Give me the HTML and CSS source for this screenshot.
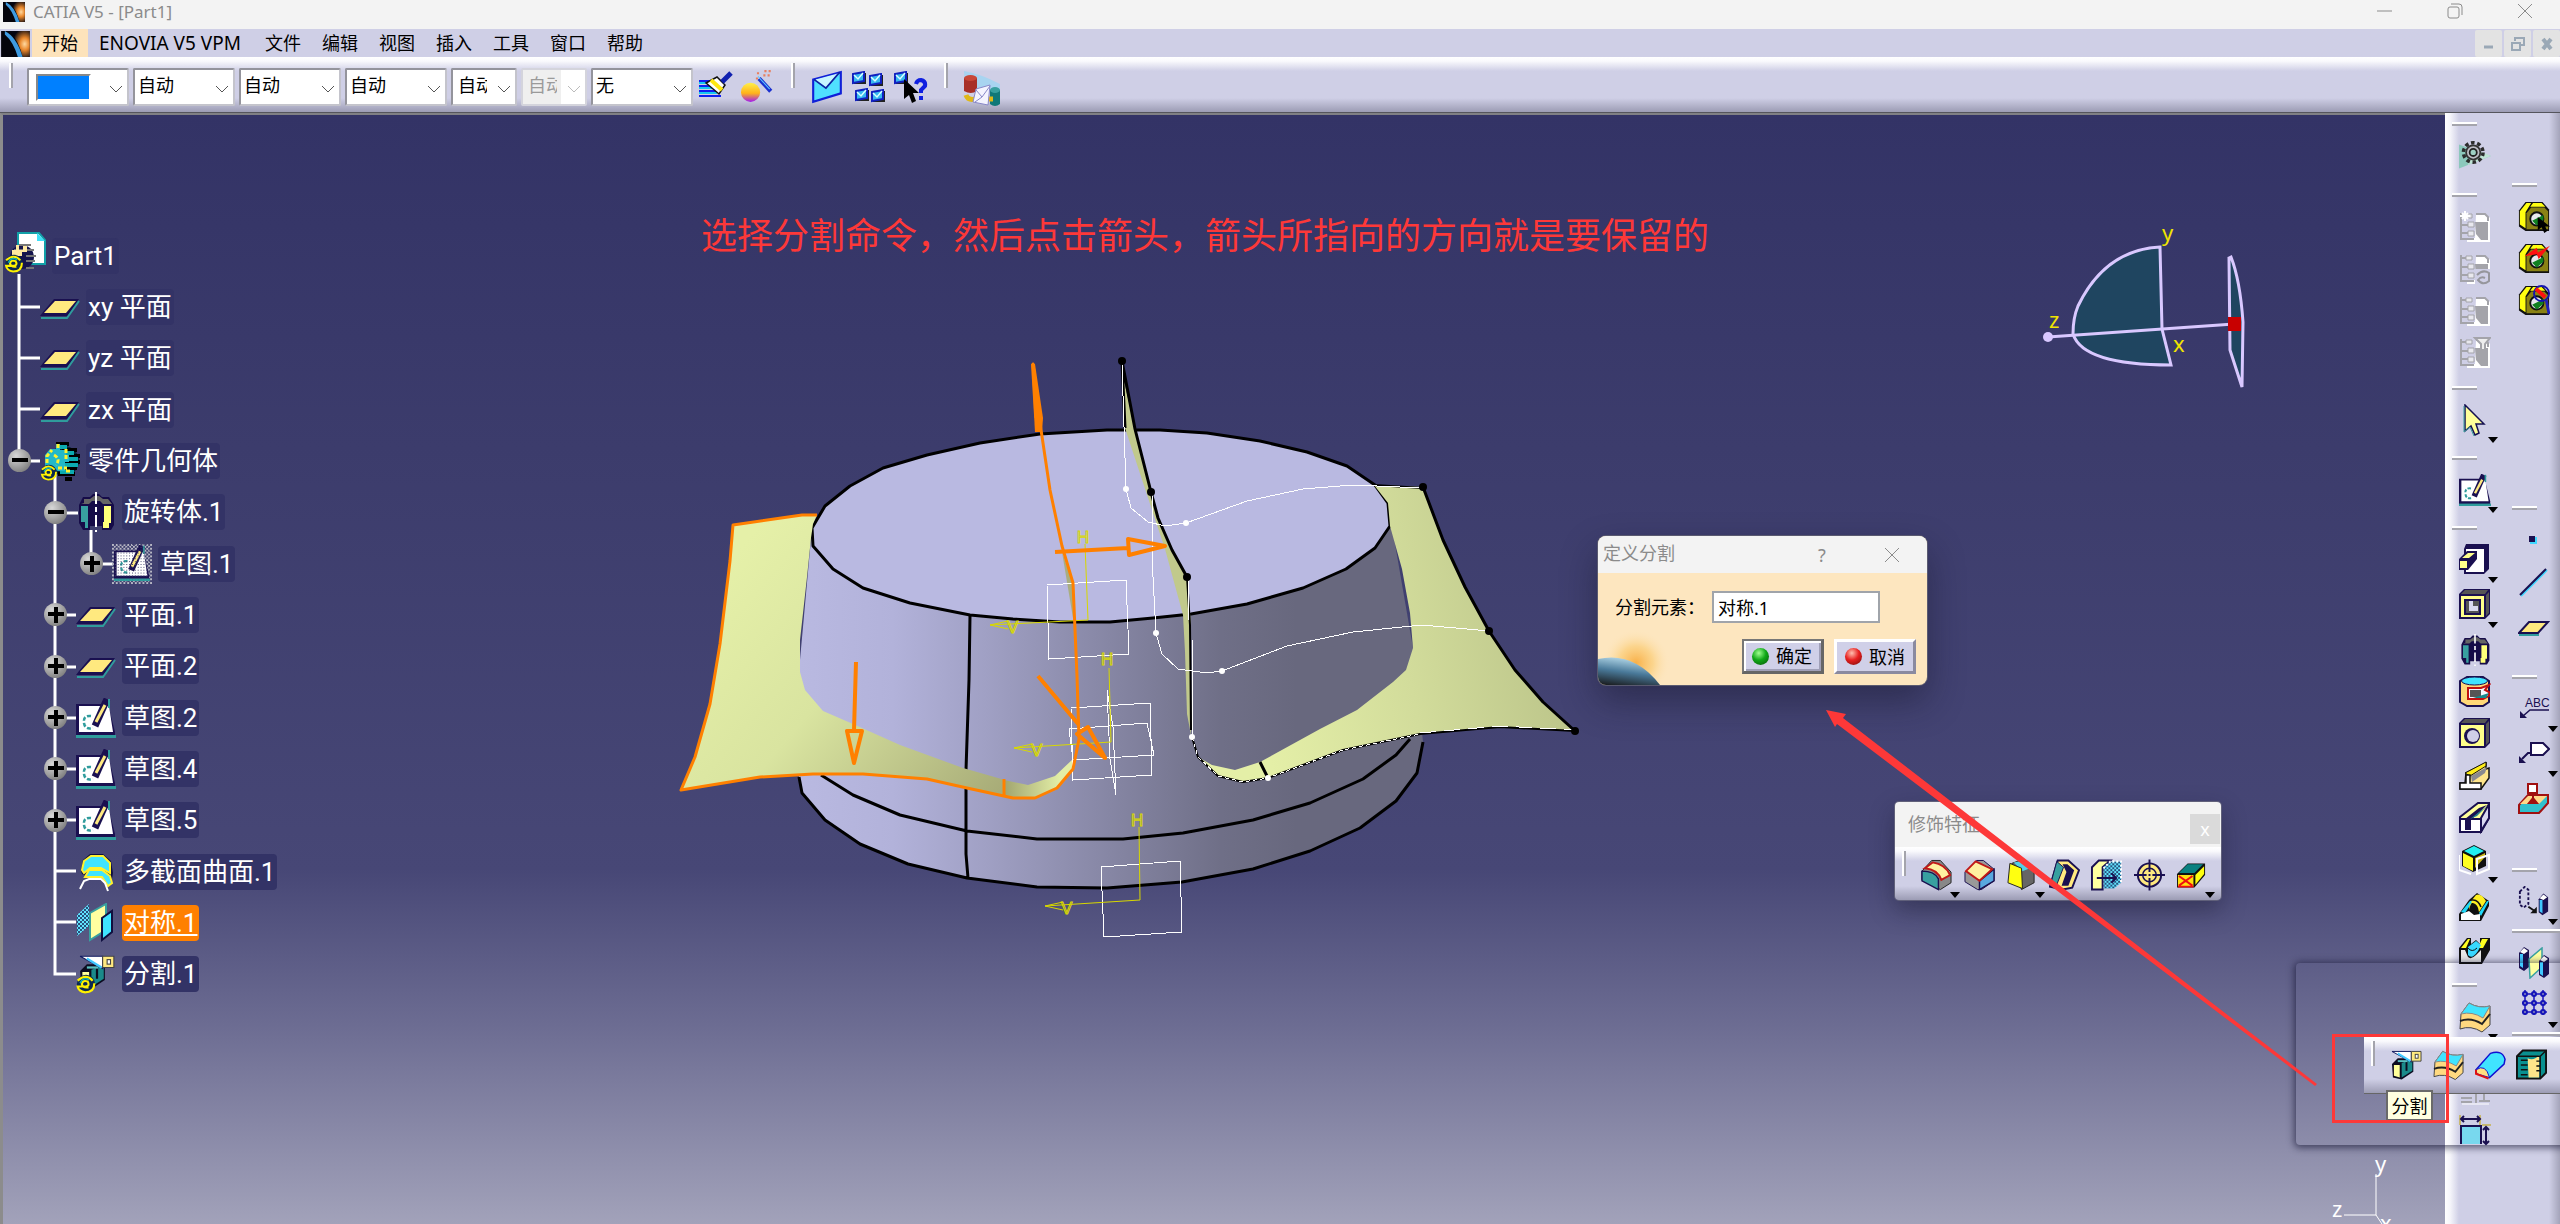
FILE: index.html
```html
<!DOCTYPE html>
<html lang="zh-CN">
<head>
<meta charset="utf-8">
<title>CATIA V5 - [Part1]</title>
<link rel="stylesheet" href="styles.css">
</head>
<body>
<svg class="defs" aria-hidden="true">
  <defs>
    <radialGradient id="sun" cx=".75" cy=".5" r=".6"><stop offset="0" stop-color="#ffd9a0"/><stop offset=".4" stop-color="#e8862a"/><stop offset="1" stop-color="#050510"/></radialGradient>
    <linearGradient id="ball" x2="0" y2="1"><stop offset="0" stop-color="#fff04a"/><stop offset=".55" stop-color="#ffb21a"/><stop offset="1" stop-color="#a21af0"/></linearGradient>
    <symbol id="logo" viewBox="0 0 24 22"><rect width="24" height="22" fill="#05050c"/><rect x="7" width="17" height="22" fill="url(#sun)"/><path d="M0 0H7Q15 9 18 22H0Z" fill="#05050c"/><path d="M3 0Q13 5 18 22H14Q10 9 3 3Z" fill="#3f9be0"/></symbol>
    <symbol id="plane" viewBox="0 0 40 40"><path d="M14 12H39L28 29H0L3 25Z" fill="#1a1050"/><path d="M39 14 27 31H1" fill="none" stroke="#2f9c9c" stroke-width="2"/><path d="M15 14H36L26 26H4Z" fill="#ffe97f"/></symbol>
    <symbol id="sketch" viewBox="0 0 40 40"><path d="M0 6H32L39 34V39H0Z" fill="#1a1050"/><path d="M3 8H33L37 34H3Z" fill="#fff"/><path d="M0 38.500H40" stroke="#2f9c9c" stroke-width="3"/><path d="M15 18Q7 17 8 25 9 32 17 30" fill="none" stroke="#2f9c9c" stroke-width="2.500" stroke-dasharray="4 2"/><path d="M31 1 19 28" stroke="#1a1050" stroke-width="7"/><path d="M29 7 20 24" stroke="#ffe97f" stroke-width="3"/><path d="M33 1V10" stroke="#2f9c9c" stroke-width="2"/></symbol>
    <symbol id="sketch-dim" viewBox="0 0 42 42"><rect width="42" height="42" fill="url(#mesh)"/><use href="#sketch" x="2" y="1" width="38" height="38"/><rect x="2" width="40" height="42" fill="url(#mesh-holes)"/></symbol>
    <pattern id="mesh" width="4" height="4" patternUnits="userSpaceOnUse"><rect width="2" height="2" fill="#b8b8c4"/><rect x="2" y="2" width="2" height="2" fill="#b8b8c4"/></pattern>
    <pattern id="mesh-holes" width="3" height="3" patternUnits="userSpaceOnUse"><rect width="1" height="1" fill="#45456f"/></pattern>
    <symbol id="shaft" viewBox="0 0 40 40"><path d="M3 13 7 5H14L17 2H23L26 5H33L38 13V33L35 38H26V34H14V38H7L3 31Z" fill="#160c48"/><path d="M8 11V7H14L18 4H23L27 7H32L36 12H27L24 9H16L13 12H5Z" fill="#666"/><path d="M5 14H12V36H9V30H5Z" fill="#38a0a0"/><path d="M28 14H35V31H33V36H27V30H28Z" fill="#ffff7a"/><path d="M20 0V40" stroke="#fff" stroke-width="2" stroke-dasharray="12 3 5 3"/></symbol>
    <symbol id="swirl" viewBox="0 0 24 24"><circle cx="12" cy="12" r="11" fill="#0d2a50"/><path d="M2 8Q12-1 20 8M22 11Q22 22 11 22 3 21 2 15H12Q17 14 14 9 8 7 7 12 8 17 15 16" fill="none" stroke="#fff200" stroke-width="2.600"/><path d="M5 11Q8 3 16 7" fill="none" stroke="#12b0b0" stroke-width="2"/></symbol>
    <symbol id="part" viewBox="0 0 42 42"><path d="M14 1H35L41 8V32H14Z" fill="#fff" stroke="#12a0a8" stroke-width="2"/><path d="M33 1 41 9H33Z" fill="#3fe0f8"/><circle cx="18" cy="25" r="12" fill="#14144c"/><path d="M15 13H27M10 18H30M22 24H32M22 29H31M22 36H30" stroke="#777" stroke-width="2"/><path d="M8 27V18H12V13H15V18H19V14H23V20H18V24H10" fill="#ffe9a0"/><use href="#swirl" x="0" y="22" width="20" height="19"/></symbol>
    <symbol id="body" viewBox="0 0 40 40"><circle cx="24" cy="20" r="15" fill="#002838"/><path d="M16 3H29M22 9H37M24 15H40M24 21H40M20 27H37M18 33H35M25 38H32" stroke="#000" stroke-width="4"/><path d="M16 6H27M20 12H34M23 18H38M20 24H38M20 31H34" stroke="#0cabb0" stroke-width="4"/><path d="M5 26V14L10 8H16V3H20V9H26V14H29V21H25V30H18Z" fill="#22b8c8"/><path d="M7 22V15L12 9M18 3V9M26 8V18M14 14Q21 18 16 24M18 27H27M30 30H24" fill="none" stroke="#fff12e" stroke-width="3" stroke-dasharray="4 2"/><use href="#swirl" x="0" y="23" width="18" height="17"/></symbol>
    <symbol id="loft" viewBox="0 0 40 40"><path d="M5 19 7 8 14 2H27L35 9 37 21 35 33 31 35 28 29 21 25H12L6 22Z" fill="#101040"/><path d="M6 18 8 9 15 4H27L34 11V21L25 16H14L8 21Z" fill="#40e4ff" stroke="#fff12e" stroke-width="2"/><path d="M9 25 13 18H26L34 24 36 31 32 34 26 25Z" fill="#40e4ff" stroke="#fff12e" stroke-width="2"/><path d="M4 37 8 29 13 27H25L29 31 32 39" fill="none" stroke="#fff" stroke-width="2"/></symbol>
    <symbol id="symmetry" viewBox="0 0 40 40"><path d="M1 12 13 1V23L1 33Z" fill="url(#dots)"/><path d="M14 10 30 1V27L14 37Z" fill="#ffffa0" stroke="#38a0a0" stroke-width="2"/><path d="M26 15 36 8V29L26 37Z" fill="#40e4ff" stroke="#101040" stroke-width="2"/></symbol>
    <pattern id="dots" width="4" height="4" patternUnits="userSpaceOnUse"><rect width="4" height="4" fill="#28507c"/><rect width="2" height="2" fill="#60e4ff"/><rect x="2" y="2" width="2" height="2" fill="#60e4ff"/></pattern>
    <symbol id="split" viewBox="0 0 32 32"><path d="M1 15 7 9H23V23L11 31 2 29Z" fill="#0c0c20"/><path d="M11 14 22 10V22L11 29Z" fill="#1a8a8a"/><path d="M3 16H9V29L3 27Z" fill="#ffff9a"/><path d="M16 12V22" stroke="#0c0c20" stroke-width="2"/><path d="M7 12H17" stroke="#5ac0c0" stroke-width="2"/><path d="M1 2H21V13Z" fill="#fff" stroke="#111a60"/><path d="M7 4 20 12" stroke="#40c8ff" stroke-width="2"/><path d="M21 2H31V12H21Z" fill="#ffe97f" stroke="#444"/><rect x="25" y="5" width="3" height="4" fill="#fff" stroke="#444"/></symbol>
    <symbol id="split-tree" viewBox="0 0 40 40"><use href="#split" x="2" y="0" width="38" height="36"/><use href="#swirl" x="0" y="20" width="20" height="20"/></symbol>

    <symbol id="gear" viewBox="0 0 36 36"><path d="M0 5 36 18 0 32Z" fill="#8cc8bc"/><path d="M16 9 36 18 10 28Z" fill="#bfe3d4"/><circle cx="16" cy="14" r="11" fill="none" stroke="#2c2c2c" stroke-width="4" stroke-dasharray="4 3"/><circle cx="16" cy="14" r="8" fill="#bcbcc4" stroke="#333" stroke-width="2"/><circle cx="16" cy="14" r="4" fill="#9fd0c4" stroke="#222" stroke-width="2"/></symbol>
    <symbol id="cache" viewBox="0 0 32 32"><path d="M17 3H27L31 7V31H8V27H16Z" fill="#fff"/><path d="M16 11H29V29H22L17 23Z" fill="#a4a4aa"/><path d="M17 3H26L29 6V10" fill="none" stroke="#a4a4aa" stroke-width="2"/><path d="M2 2V28H15M2 5H8M2 14H9M2 22H9" fill="none" stroke="#a4a4aa" stroke-width="2"/><path d="M7 3H13V7H7ZM9 11H15V16H9ZM9 20H15V25H9Z" fill="#e8e8ee" stroke="#a4a4aa"/></symbol>
    <symbol id="cache-new" viewBox="0 0 32 32"><use href="#cache"/><path d="M6 0V10M1 5H11M3 2 9 8M9 2 3 8" stroke="#fff" stroke-width="2"/></symbol>
    <symbol id="cache-link" viewBox="0 0 32 32"><use href="#cache"/><path d="M16 16H32V32H16Z" fill="#cfcfe6"/><path d="M18 22Q24 16 30 20V28Q24 33 19 27 22 23 26 25" fill="none" stroke="#96969c" stroke-width="2"/></symbol>
    <symbol id="cache-filter" viewBox="0 0 32 32"><use href="#cache"/><path d="M16 1H31L26 7V13H22V7Z" fill="#eee" stroke="#a4a4aa" stroke-width="2"/></symbol>
    <symbol id="pointer" viewBox="0 0 32 32"><path d="M6 1V27L12 22 16 31 20 29 17 20H25Z" fill="#ffff9a" stroke="#141050" stroke-width="1.500"/><path d="M5 2V28L11 23 15 32" fill="none" stroke="#3a9c9c"/></symbol>
    <symbol id="pad" viewBox="0 0 32 32"><path d="M7 0H30V25L25 30H5V5Z" fill="#1a1050"/><path d="M7 5H25V28H7Z" fill="#fff"/><path d="M0 15 8 7H18V15L9 26H0Z" fill="#1a1050"/><path d="M1 17H8V24H1ZM3 14 9 9H16L10 14Z" fill="#ffff8a"/></symbol>
    <symbol id="pocket" viewBox="0 0 32 32"><path d="M0 5 5 0H31V25L26 30H0Z" fill="#1a1050"/><path d="M6 1H29L26 5H2ZM27 6 30 3V24L27 27Z" fill="#555"/><path d="M2 7H25V28H2Z" fill="#ffff8a"/><path d="M6 11H21V25H6Z" fill="#555" stroke="#1a1050" stroke-width="2"/><path d="M10 12H14V17H19V22H10Z" fill="#d8d8ee"/></symbol>
    <symbol id="groove" viewBox="0 0 32 32"><path d="M1 5 8 1H24L30 5V26L24 30H8L1 26Z" fill="#ffd878" stroke="#1a1050" stroke-width="2"/><ellipse cx="15.500" cy="5" rx="13" ry="4" fill="#40e4ff" stroke="#1a1050"/><path d="M30 9 22 12H9V23H24L30 20V16L26 14Z" fill="#f7f7ff" stroke="#c01010" stroke-width="2"/><path d="M11 14H22V21H11Z" fill="#555"/><path d="M14 22 30 17 27 22Z" fill="#15888c"/></symbol>
    <symbol id="hole" viewBox="0 0 32 32"><path d="M0 5 5 0H31V25L26 30H0Z" fill="#1a1050"/><path d="M6 1H29L26 5H2ZM27 6 30 3V24L27 27Z" fill="#555"/><path d="M2 7H25V28H2Z" fill="#ffff8a"/><circle cx="13" cy="18" r="8" fill="#1a1050"/><circle cx="14" cy="18" r="6" fill="#cfcfe6"/></symbol>
    <symbol id="rib" viewBox="0 0 32 32"><path d="M7 13 27 3V9L30 8V18L22 29H1V23H6Z" fill="#ffe58a" stroke="#111" stroke-width="1.500"/><path d="M12 16 28 7 26 13 13 22Z" fill="#8a8a90"/><path d="M6 13 27 2V6L11 16Z" fill="#ffee18" stroke="#111"/><path d="M1 23H7V15H11V23H22V29H1Z" fill="#fff" stroke="#111" stroke-width="1.500"/></symbol>
    <symbol id="slot" viewBox="0 0 32 32"><path d="M1 15 19 1H30V16L22 30H1Z" fill="#ffff9a" stroke="#1a1050" stroke-width="2"/><path d="M1 17H22V30H1Z" fill="#fff" stroke="#1a1050" stroke-width="2"/><path d="M22 16 30 2V16L22 29Z" fill="#d8d8f0" stroke="#1a1050" stroke-width="2"/><path d="M6 17 20 6 28 3 12 18V28H6Z" fill="#1a1050"/><path d="M11 17 28 4 18 14Z" fill="#20808c"/></symbol>
    <symbol id="stiffener" viewBox="0 0 32 32"><path d="M15 1 27 7V22L14 28 3 22V7Z" fill="#111"/><path d="M15 2 25 7 15 12 5 7Z" fill="#20f0f0"/><path d="M4 9 14 14V27L4 22Z" fill="#ffff20"/><path d="M16 14 26 9V13L16 24Z" fill="#ccb818"/><path d="M0 11V26L12 30M30 11V25L18 30V15Z" fill="none" stroke="#fff" stroke-width="2"/></symbol>
    <symbol id="multi" viewBox="0 0 32 32"><path d="M0 22 10 8 18 1 30 9V14L22 29H0Z" fill="#111"/><path d="M2 20 11 9H14L6 21ZM20 21 28 9H30L22 24Z" fill="#20d8f8"/><path d="M2 28V22L10 19 15 23 21 22V28Z" fill="#fff"/><path d="M10 18Q10 10 14 11 19 12 20 20L27 9Q22 1 17 3L13 8Z" fill="#fff020"/><path d="M13 8Q19 7 22 15" fill="none" stroke="#111" stroke-width="1.500"/></symbol>
    <symbol id="multi-cut" viewBox="0 0 32 32"><path d="M0 12 8 2H12V8L17 4 21 8V2H31V14L23 28H0Z" fill="#111"/><path d="M2 14H6L9 21Q12 24 17 19L22 14V26H2Z" fill="#e8e8e8"/><path d="M2 12 9 3H11L7 12ZM23 3H29L24 12H19Z" fill="#ffff20"/><path d="M9 11 17 5 22 9 19 15Q13 24 9 19Z" fill="#38d8ff"/><path d="M9 12Q13 17 18 12" fill="none" stroke="#111"/></symbol>
    <symbol id="thick" viewBox="0 0 32 32"><path d="M2 13 10 2Q20 8 31 5V24L23 31Q12 24 1 28Z" fill="#ffd980" stroke="#444"/><path d="M2 13 10 2Q20 8 31 5L24 17Q13 10 2 13Z" fill="#40e4ff" stroke="#888"/><path d="M1 20Q12 16 23 23L31 13" fill="none" stroke="#222" stroke-width="2"/></symbol>
    <symbol id="grayed" viewBox="0 0 32 32"><path d="M2 2H14M2 20H13M2 25H13M2 29H13M17 2V30M25 8V28M20 28H31" stroke="#a4a4aa" stroke-width="2"/><path d="M3 31H30" stroke="#fff"/></symbol>
    <symbol id="constraint" viewBox="0 0 32 32"><rect x="2" y="11" width="20" height="18" fill="#78d8ee"/><path d="M2 29V11H22V29" fill="none" stroke="#1a1050" stroke-width="2"/><path d="M1 0V10M21 0V10M23 10H32" stroke="#c8b870" stroke-width="2"/><path d="M2 4H21M5 1 2 4 5 7M18 1 21 4 18 7M27 12V29M24 15 27 12 30 15M24 26 27 29 30 26" fill="none" stroke="#1a1050" stroke-width="2"/></symbol>
    <symbol id="block" viewBox="0 0 34 34"><path d="M1 10 8 1H26L33 9V32H8L1 27Z" fill="#111"/><path d="M2 11 9 2H14L8 12V29L2 25ZM16 2H25L29 6H13Z" fill="#ffff10"/><path d="M9 13 14 7H28L32 11V30H9Z" fill="#8a8214"/><circle cx="20" cy="19" r="7" fill="#e8e8ee" stroke="#111" stroke-width="2"/><path d="M15 21 27 15V20L20 26Z" fill="#108020"/></symbol>
    <symbol id="block-pick" viewBox="0 0 34 34"><use href="#block"/><path d="M21 17V31L25 28 28 34 31 32 29 27H34Z" fill="#000"/></symbol>
    <symbol id="block-bolt" viewBox="0 0 34 34"><use href="#block"/><path d="M7 14 20 5 21 10 34 3 22 17 20 12Z" fill="#ff1010"/></symbol>
    <symbol id="block-lens" viewBox="0 0 34 34"><use href="#block"/><circle cx="25" cy="9" r="8" fill="none" stroke="#1414b0" stroke-width="2"/><path d="M19 4 29 13" stroke="#ff1010" stroke-width="4"/><path d="M30 16 33 31" stroke="#2020b8" stroke-width="3"/></symbol>
    <symbol id="point" viewBox="0 0 32 32"><rect x="12" y="13" width="7" height="7" fill="#40d8ff"/><rect x="11" y="12" width="6" height="6" fill="#1a1050"/></symbol>
    <symbol id="line" viewBox="0 0 32 32"><path d="M3 30 29 4" stroke="#40d8ff" stroke-width="2"/><path d="M2 29 28 3" stroke="#1a1050" stroke-width="2"/></symbol>
    <symbol id="plane-small" viewBox="0 0 32 32"><path d="M11 14H30L20 25H1Z" fill="#ffe97f" stroke="#1a1050" stroke-width="2"/><path d="M1 27H21" stroke="#2f9c9c" stroke-width="2"/></symbol>
    <symbol id="text-note" viewBox="0 0 32 32"><text x="7" y="14" class="glyph-text" fill="#1a1050">ABC</text><path d="M31 17H12L5 23" fill="none" stroke="#1a1050" stroke-width="1.500"/><path d="M2 18V25H9Z" fill="#1a1050"/></symbol>
    <symbol id="flag-note" viewBox="0 0 32 32"><path d="M13 5H25L31 11 25 17H13Z" fill="#fff" stroke="#1a1050" stroke-width="2"/><path d="M13 15H10L4 21" stroke="#1a1050" stroke-width="2" fill="none"/><path d="M1 18V25H8Z" fill="#1a1050"/></symbol>
    <symbol id="datum" viewBox="0 0 32 32"><path d="M1 22 10 12H30V20L21 30H1Z" fill="#30c0cc" stroke="#a01010" stroke-width="2"/><path d="M2 21 10 13H29L21 21Z" fill="#ffd888"/><path d="M15 10V15L11 20H19L15 15" fill="#a01010" stroke="#a01010" stroke-width="2"/><path d="M10 1H19V10H10Z" fill="#fff" stroke="#a01010" stroke-width="2"/></symbol>
    <symbol id="translate" viewBox="0 0 32 34"><path d="M1 6 6 1 10 4V19L5 23 1 20Z" fill="none" stroke="#1a1050" stroke-width="2" stroke-dasharray="3 2"/><path d="M10 22 16 26" stroke="#111" stroke-width="2"/><path d="M12 29H19V22Z" fill="#111"/><path d="M21 14 26 8 31 12V27L25 31 21 28Z" fill="#1a1050"/><path d="M22 15H25V29L22 27Z" fill="#40c8ff"/><path d="M22 13 26 9 30 12 26 15Z" fill="#fff"/></symbol>
    <symbol id="mirror" viewBox="0 0 32 32"><path d="M1 6 6 0 11 3V20L6 24 1 21Z" fill="#1a1050"/><path d="M2 7H5V21L2 19Z" fill="#40c8ff"/><path d="M2 5 6 1 10 4 6 7Z" fill="#fff"/><path d="M11 12 24 1V20L12 31Z" fill="#ffffa0" stroke="#38a0a0" stroke-width="1.500"/><path d="M21 14 26 8 31 11V27L26 31 21 28Z" fill="#1a1050"/><path d="M22 15H25V29L22 27Z" fill="#40c8ff"/><path d="M22 13 26 9 30 12 26 15Z" fill="#fff"/></symbol>
    <symbol id="pattern" viewBox="0 0 32 32"><path d="M4 5H29M4 14H29M4 23H29M7 1V26M16 1V26M25 1V26" stroke="#1a10c0" stroke-width="1.500"/><g fill="#8a8ac0" stroke="#1414b8" stroke-width="2"><circle cx="7" cy="5" r="2"/><circle cx="16" cy="5" r="2"/><circle cx="25" cy="5" r="2"/><circle cx="7" cy="14" r="2"/><circle cx="16" cy="14" r="2"/><circle cx="25" cy="14" r="2"/><circle cx="7" cy="23" r="2"/><circle cx="16" cy="23" r="2"/><circle cx="25" cy="23" r="2"/></g></symbol>
    <symbol id="close-surface" viewBox="0 0 32 32"><path d="M1 21 16 4Q28 0 31 10L30 15 15 29Z" fill="#40e4ff" stroke="#1010d0" stroke-width="1.500"/><path d="M1 21Q11 14 15 29L2 25Z" fill="#ffdf80" stroke="#1010d0"/><path d="M1 21V25L14 30" fill="none" stroke="#e01010" stroke-width="2"/></symbol>
    <symbol id="sew" viewBox="0 0 32 32"><path d="M1 7 7 1H31V24L25 30H1Z" fill="#0a9090" stroke="#111" stroke-width="2"/><path d="M12 9Q18 12 24 6V29H13Z" fill="#ffe58a"/><path d="M1 7H25L31 1M25 7V30M5 11H12M5 16H12M5 21H12M5 26H12M21 12H25M21 17H25M21 22H25" fill="none" stroke="#111" stroke-width="1.500"/></symbol>
    <symbol id="fillet" viewBox="0 0 32 32"><path d="M1 12 11 1H20L31 13V24L20 31 1 21Z" fill="#888" stroke="#222"/><path d="M1 12Q14 12 18 20V31L1 22Z" fill="#38a0a0" stroke="#1a1050" stroke-width="1.500"/><path d="M4 9 12 3Q25 5 30 16L21 21Q17 10 4 9Z" fill="#fff0a0" stroke="#c01818" stroke-width="2"/></symbol>
    <symbol id="chamfer" viewBox="0 0 32 32"><path d="M1 13 13 1H20L31 10V22L18 31H14L1 23Z" fill="#999" stroke="#1a1050"/><path d="M16 22 31 10V22L16 31Z" fill="#58a8e0" stroke="#1a1050" stroke-width="1.500"/><path d="M2 12 12 2 29 10 16 22Z" fill="#fff0a0" stroke="#c01818" stroke-width="2"/></symbol>
    <symbol id="draft" viewBox="0 0 32 32"><path d="M6 4 17 0 29 8V24L16 31Z" fill="#666" stroke="#222"/><path d="M8 3 18 1 27 8 17 12Z" fill="#50d0e8"/><path d="M4 4 16 9 17 30 2 24Z" fill="#ffff10" stroke="#222"/></symbol>
    <symbol id="shell" viewBox="0 0 32 32"><path d="M9 1H20L31 11 24 29 14 31 1 28Z" fill="#ffe97f" stroke="#1a1050" stroke-width="2"/><path d="M8 2 1 28 8 26 15 8Z" fill="#38a0a0" stroke="#1a1050"/><path d="M14 5H19L26 11 20 27H13L18 13Z" fill="#1a1050"/></symbol>
    <symbol id="thickness" viewBox="0 0 32 32"><path d="M1 8 8 1H20L12 8V31H1Z" fill="#ffffa0" stroke="#1a1050" stroke-width="2"/><path d="M13 8 20 2H31V24L24 30H13Z" fill="url(#dots)"/><path d="M13 9 20 2H31V24" fill="none" stroke="#fff" stroke-width="2" stroke-dasharray="2 2"/><path d="M6 19H26M21 14 26 19 21 24" fill="none" stroke="#1a1050" stroke-width="2"/></symbol>
    <symbol id="thread" viewBox="0 0 32 32"><circle cx="16" cy="16" r="12" fill="#ffe97f" stroke="#1a1050" stroke-width="2"/><circle cx="16" cy="16" r="7" fill="none" stroke="#1a1050" stroke-width="1.500"/><path d="M16 0V32M0 16H32" stroke="#1a1050" stroke-width="2" stroke-dasharray="13 2 2 2"/></symbol>
    <symbol id="remove-face" viewBox="0 0 32 32"><path d="M1 15 12 4H30V16L19 29H1Z" fill="#111"/><path d="M3 14 12 5H28L19 14Z" fill="#0a8080"/><path d="M20 16 29 7V15L20 26Z" fill="#ffff10"/><path d="M2 16H18V28H2Z" fill="#ffe010"/><path d="M3 17 17 27M17 17 3 27M2 28H18" stroke="#f01010" stroke-width="2"/></symbol>

    <symbol id="brush" viewBox="0 0 34 32"><path d="M0 10H13M0 15H15M0 20H18M0 25H22" stroke="#1020f0" stroke-width="2"/><path d="M0 12H12M0 17H15M0 22H18" stroke="#18c8f0" stroke-width="2"/><path d="M7 12 18 6 26 14 20 23Z" fill="#fff" stroke="#111" stroke-width="1.500"/><path d="M12 9 23 19" stroke="#ffe810" stroke-width="4"/><path d="M23 11 32 2" stroke="#1020b0" stroke-width="5"/></symbol>
    <symbol id="wand" viewBox="0 0 32 32"><circle cx="9" cy="21" r="9" fill="url(#ball)"/><path d="M17 8 28 20" stroke="#1a30d0" stroke-width="4"/><path d="M16 6 27 18" stroke="#60c8ff"/><path d="M15 3H19M22 1H29M21 5H29M14 8H18" stroke="#e88060" stroke-width="2" stroke-dasharray="2 2"/></symbol>
    <symbol id="mail" viewBox="0 0 30 32"><path d="M2 9 28 2V22L2 30Z" fill="#50e0ff" stroke="#1020d8" stroke-width="2"/><path d="M4 9 26 3 14 16Z" fill="#c8f6ff"/><path d="M3 9 14 17 27 2" fill="none" stroke="#1020a0" stroke-width="1.500"/></symbol>
    <symbol id="mail-mini" viewBox="0 0 14 14"><path d="M3 13V12H13V2" fill="none" stroke="#222" stroke-width="2"/><path d="M1 3 12 1V10L1 12Z" fill="#38b8f0" stroke="#1020c0" stroke-width="2"/><path d="M2 4 6 8 11 2" fill="none" stroke="#d8ffff" stroke-width="1.500"/></symbol>
    <symbol id="mails" viewBox="0 0 34 32"><use href="#mail-mini" x="0" y="0" width="14" height="14"/><use href="#mail-mini" x="17" y="2" width="14" height="14"/><use href="#mail-mini" x="3" y="17" width="14" height="14"/><use href="#mail-mini" x="19" y="18" width="14" height="14"/></symbol>
    <symbol id="mail-help" viewBox="0 0 34 32"><use href="#mail-mini" x="0" y="0" width="14" height="14"/><path d="M10 8V28L15 24 18 32 22 30 19 22H25Z" fill="#000"/><path d="M22 13Q23 9 27 9 32 10 31 15L27 19V22M27 25V29" fill="none" stroke="#1020e0" stroke-width="4"/></symbol>
    <symbol id="database" viewBox="0 0 38 38"><path d="M1 1Q18 4 37 14V24L2 20Z" fill="#a8d4f0"/><path d="M1 8V21Q8 25 14 21V8Z" fill="#a83028"/><ellipse cx="7.500" cy="8" rx="6.500" ry="3" fill="#c84838"/><path d="M27 20V34Q32 38 37 34V20Z" fill="#107878"/><ellipse cx="32" cy="20" rx="5" ry="3" fill="#38a0a0"/><path d="M3 25Q5 31 13 29M30 29H22" fill="none" stroke="#e0b818" stroke-width="5"/><path d="M13 19 27 15 25 35 10 32Z" fill="#f4f4ff" stroke="#8888c8"/><path d="M13 20 19 27 27 16M19 27 12 32" fill="none" stroke="#8888c8"/></symbol>
  </defs>
</svg>

<header class="titlebar">
  <svg class="titlebar-icon"><use href="#logo"/></svg>
  <h1>CATIA V5 - [Part1]</h1>
  <div class="window-controls">
    <button aria-label="最小化"><svg viewBox="0 0 16 16"><path d="M0 8H15"/></svg></button>
    <button aria-label="还原"><svg viewBox="0 0 16 16"><rect x="1" y="4" width="11" height="11" rx="2"/><path d="M4 1H12Q15 1 15 4V12"/></svg></button>
    <button aria-label="关闭"><svg viewBox="0 0 16 16"><path d="M1 1 15 15M15 1 1 15"/></svg></button>
  </div>
</header>

<nav class="menubar">
  <svg class="menubar-icon"><use href="#logo"/></svg>
  <button class="active">开始</button><button class="latin">ENOVIA V5 VPM</button><button>文件</button><button>编辑</button><button>视图</button><button>插入</button><button>工具</button><button>窗口</button><button>帮助</button>
  <div class="doc-controls">
    <button aria-label="最小化文档"><svg viewBox="0 0 14 14"><path d="M2 10H11" stroke-width="3"/></svg></button>
    <button aria-label="还原文档"><svg viewBox="0 0 14 14"><path d="M4 4V1H13V8H10M1 6H9V13H1Z" stroke-width="2"/></svg></button>
    <button aria-label="关闭文档"><svg viewBox="0 0 14 14"><path d="M3 2 11 12M11 2 3 12" stroke-width="4"/></svg></button>
  </div>
</nav>

<div class="toolbar">
  <i class="grip-v"></i>
  <div class="combos">
    <div class="combo"><select aria-label="颜色"><option></option></select><span class="swatch"></span><svg viewBox="0 0 14 8"><path d="M1 1 7 7 13 1"/></svg></div>
    <div class="combo"><select aria-label="透明度"><option>自动</option></select><svg viewBox="0 0 14 8"><path d="M1 1 7 7 13 1"/></svg></div>
    <div class="combo"><select aria-label="线宽"><option>自动</option></select><svg viewBox="0 0 14 8"><path d="M1 1 7 7 13 1"/></svg></div>
    <div class="combo"><select aria-label="线型"><option>自动</option></select><svg viewBox="0 0 14 8"><path d="M1 1 7 7 13 1"/></svg></div>
    <div class="combo narrow"><select aria-label="点符号"><option>自动</option></select><svg viewBox="0 0 14 8"><path d="M1 1 7 7 13 1"/></svg></div>
    <div class="combo narrow disabled"><select aria-label="渲染样式" disabled><option>自动</option></select><svg viewBox="0 0 14 8"><path d="M1 1 7 7 13 1"/></svg></div>
    <div class="combo"><select aria-label="图层"><option>无</option></select><svg viewBox="0 0 14 8"><path d="M1 1 7 7 13 1"/></svg></div>
  </div>
  <div class="group">
    <button aria-label="格式刷"><svg><use href="#brush"/></svg></button>
    <button aria-label="向导"><svg><use href="#wand"/></svg></button>
  </div>
  <i class="grip-v"></i>
  <div class="group spaced">
    <button aria-label="消息"><svg><use href="#mail"/></svg></button>
    <button aria-label="消息列表"><svg><use href="#mails"/></svg></button>
    <button aria-label="这是什么"><svg><use href="#mail-help"/></svg></button>
  </div>
  <i class="grip-v"></i>
  <div class="group spaced">
    <button aria-label="数据库" class="large"><svg><use href="#database"/></svg></button>
  </div>
</div>

<main class="workspace">
  <section class="viewport">
    <svg class="scene" viewBox="3 115 2442 1109" preserveAspectRatio="xMinYMin meet">
      <defs>
        <linearGradient id="side" gradientUnits="userSpaceOnUse" x1="800" y1="0" x2="1420" y2="0"><stop offset="0" stop-color="#b9b9e1"/><stop offset=".15" stop-color="#b2b2da"/><stop offset=".3" stop-color="#a0a0c4"/><stop offset=".5" stop-color="#8686a4"/><stop offset=".68" stop-color="#6f6f87"/><stop offset=".8" stop-color="#68687e"/><stop offset="1" stop-color="#68687e"/></linearGradient>
        <linearGradient id="wingL" gradientUnits="userSpaceOnUse" x1="730" y1="560" x2="1000" y2="790"><stop offset="0" stop-color="#e5f0a8"/><stop offset=".45" stop-color="#d9e4a0"/><stop offset="1" stop-color="#a8ac78"/></linearGradient>
        <linearGradient id="curlL" gradientUnits="userSpaceOnUse" x1="1005" y1="0" x2="1060" y2="0"><stop offset="0" stop-color="#a2a670"/><stop offset="1" stop-color="#e3eea6"/></linearGradient>
        <linearGradient id="wingR" gradientUnits="userSpaceOnUse" x1="1270" y1="760" x2="1570" y2="700"><stop offset="0" stop-color="#e4efa7"/><stop offset=".5" stop-color="#d2dc9b"/><stop offset="1" stop-color="#bcc58a"/></linearGradient>
      </defs>
      <path fill="url(#side)" d="M812 528 800 660 799 777 802 793 825 820 860 844 908 864 967 878 1037 887 1107 888 1182 882 1253 869 1310 851 1360 828 1396 801 1417 773 1423 742 1413 648 1390 515Z"/>
      <path class="edge top" d="M812 528 825 506 850 486 883 468 927 455 980 443 1040 434 1107 430 1160 430 1207 433 1260 441 1307 452 1347 466 1375 485 1388 503 1390 526 1375 548 1346 569 1303 588 1247 604 1191 614 1153 618 1110 622 1060 622 1013 619 970 615 910 603 863 588 833 569 813 546Z"/>
      <path class="edge" d="M799 777 802 793 825 820 860 844 908 864 967 878 1037 887 1107 888 1182 882 1253 869 1310 851 1360 828 1396 801 1417 773 1423 742M821 775 853 795 900 815 967 831 1037 839 1123 839 1183 833 1253 820 1310 803 1363 779 1396 755 1410 739M970 616 969 680 966 770V854L968 878"/>
      <path fill="url(#wingL)" d="M817 515 802 515 733 525 730 561 720 644 710 704 695 757 681 790 760 777 813 774 863 774 927 779 967 788 1005 797V780L963 768 900 745 853 724 823 711 805 690 800 672V640L807 577 811 538 813 524Z"/>
      <path fill="url(#curlL)" d="M1004 780 1028 785 1055 776 1073 759V769L1057 788 1035 798 1005 797Z"/>
      <path fill="#a9ad80" d="M1062 552 1073 584V618Z"/>
      <path fill="url(#wingR)" d="M1374 485 1423 487 1443 540 1465 587 1489 631 1515 670 1543 702 1575 731 1500 727 1420 734 1343 750 1268 778 1243 782 1218 776 1198 757 1212 765 1235 770 1260 762 1320 729 1357 710 1393 682 1406 670 1413 648 1410 613 1402 569 1390 526 1388 503Z"/>
      <path fill="#c1c98c" d="M1122 372 1135 429 1151 492 1158 518 1172 550 1187 577 1191 625V735L1187 714 1185 652 1183 615 1165 549 1152 510 1125 428Z"/>
      <path class="edge" d="M1423 487 1443 540 1465 587 1489 631 1515 670 1543 702 1575 731M1125 428 1122 361 1135 429 1151 492 1158 518 1172 550 1187 577M1260 762 1268 778"/>
      <path class="edge thin" d="M1187 577 1190 625 1191 730M1192 737 1198 757 1218 776 1243 782 1268 778 1343 750 1420 734 1500 727 1575 731M1374 485 1423 488"/>
      <path class="wire" d="M1188 580 1189 620M1192 640V735"/>
      <path class="wire dotted" d="M1192 737 1198 757 1218 776 1243 782 1268 778 1343 750 1420 734"/>
      <path class="wire dashed" d="M1420 733 1500 726 1575 730"/>
      <path class="wire" d="M1122 364 1126 489 1131 508 1148 522 1165 526 1186 523 1247 501 1303 489 1353 485 1423 488M1152 494 1153 577 1156 633 1162 654 1178 669 1207 673 1222 671 1287 646 1353 632 1422 625 1489 631"/>
      <g fill="#000"><circle cx="1122" cy="361" r="4"/><circle cx="1151" cy="492" r="4"/><circle cx="1187" cy="577" r="4"/><circle cx="1423" cy="487" r="4"/><circle cx="1489" cy="631" r="4"/><circle cx="1575" cy="731" r="4"/></g>
      <g fill="#fff"><circle cx="1126" cy="489" r="3"/><circle cx="1186" cy="523" r="3"/><circle cx="1156" cy="633" r="3"/><circle cx="1222" cy="671" r="3"/><circle cx="1192" cy="737" r="3"/><circle cx="1268" cy="778" r="3"/></g>
      <path class="wire" d="M1047 585 1126 580 1129 654 1049 659ZM1071 708 1150 703 1152 775 1073 780ZM1069 729 1147 723 1154 755 1073 760ZM1107 690 1113 727 1116 795 1110 759ZM1101 867 1180 861 1182 932 1104 937Z"/>
      <g class="axis">
        <path d="M1085 544 1088 620 990 625 1008 621M990 625 1008 629M1109 668 1111 742 1014 748 1032 744M1014 748 1032 752M1139 827 1140 900 1045 906 1063 902M1045 906 1063 910"/>
        <text x="1077" y="543">H</text><text x="1101" y="665">H</text><text x="1131" y="826">H</text>
        <text x="1007" y="633">V</text><text x="1031" y="756">V</text><text x="1061" y="914">V</text>
      </g>
      <path class="selected" d="M817 515H802L733 525 730 561 720 644 710 704 695 757 681 790 760 777 813 774H863L927 779 967 788 1013 798H1035L1057 788 1073 769 1079 739 1077 676 1073 583 1062 546 1050 490 1040 423 1033 364 1036 418M1004 779V797"/>
      <path fill="#ff8000" d="M1031 364H1035L1043 418L1042 432H1035Z"/>
      <path class="selected bold" d="M1055 552 1128 548M1128 539 1129 555 1165 546ZM856 662 854 730M847 731H862L854 763ZM1038 676 1079 725M1088 727 1077 734 1105 758Z"/>

      <g class="compass">
        <path class="pane" d="M2162 329 2160 247Q2105 250 2078 306 2073 318 2073 334 2083 365 2171 365Z"/>
        <path class="pane" d="M2229 258 2231 257Q2240 280 2243 322L2242 387 2230 350Z"/>
        <path d="M2048 337 2234 324"/>
        <circle cx="2048" cy="337" r="5" fill="#d9c8ff" stroke="none"/>
        <rect x="2228" y="317" width="13" height="14" fill="#c80000" stroke="none"/>
        <text x="2162" y="241">y</text><text x="2049" y="328">z</text><text x="2173" y="352">x</text>
      </g>
      <g class="triad"><path d="M2344 1215H2376V1174M2376 1215 2382 1224"/><text x="2375" y="1172">y</text><text x="2332" y="1217">z</text><text x="2380" y="1231">x</text></g>
    </svg>

    <div class="tree">
      <svg class="tree-lines" viewBox="0 0 120 770"><path d="M15 44V232M15 77H36M15 128H36M15 179H36M15 231H36M51 240V744H72M51 283H74M51 385H72M51 437H72M51 488H72M51 539H72M51 590H72M51 641H72M51 692H72M87 300V334H109"/></svg>
      <ul>
        <li class="d0"><svg class="icon"><use href="#part"/></svg><span>Part1</span></li>
        <li class="d1"><svg class="icon"><use href="#plane"/></svg><span>xy 平面</span></li>
        <li class="d1"><svg class="icon"><use href="#plane"/></svg><span>yz 平面</span></li>
        <li class="d1"><svg class="icon"><use href="#plane"/></svg><span>zx 平面</span></li>
        <li class="d1"><button class="knob minus" aria-label="折叠"></button><svg class="icon"><use href="#body"/></svg><span>零件几何体</span></li>
        <li class="d2"><button class="knob minus" aria-label="折叠"></button><svg class="icon"><use href="#shaft"/></svg><span>旋转体.1</span></li>
        <li class="d3"><button class="knob plus" aria-label="展开"></button><svg class="icon"><use href="#sketch-dim"/></svg><span>草图.1</span></li>
        <li class="d2"><button class="knob plus" aria-label="展开"></button><svg class="icon"><use href="#plane"/></svg><span>平面.1</span></li>
        <li class="d2"><button class="knob plus" aria-label="展开"></button><svg class="icon"><use href="#plane"/></svg><span>平面.2</span></li>
        <li class="d2"><button class="knob plus" aria-label="展开"></button><svg class="icon"><use href="#sketch"/></svg><span>草图.2</span></li>
        <li class="d2"><button class="knob plus" aria-label="展开"></button><svg class="icon"><use href="#sketch"/></svg><span>草图.4</span></li>
        <li class="d2"><button class="knob plus" aria-label="展开"></button><svg class="icon"><use href="#sketch"/></svg><span>草图.5</span></li>
        <li class="d2"><svg class="icon"><use href="#loft"/></svg><span>多截面曲面.1</span></li>
        <li class="d2"><svg class="icon"><use href="#symmetry"/></svg><span class="current">对称.1</span></li>
        <li class="d2"><svg class="icon"><use href="#split-tree"/></svg><span>分割.1</span></li>
      </ul>
    </div>
    <p class="note">选择分割命令，然后点击箭头，箭头所指向的方向就是要保留的</p>
  </section>

  <aside class="dock">
    <div class="dock-col first">
      <section class="s-top"><i class="grip-h"></i><button aria-label="工作台"><svg><use href="#gear"/></svg></button></section>
      <section class="s-cache"><i class="grip-h"></i><button aria-label="新建"><svg><use href="#cache-new"/></svg></button><button aria-label="链接"><svg><use href="#cache-link"/></svg></button><button aria-label="缓存"><svg><use href="#cache"/></svg></button><button aria-label="过滤"><svg><use href="#cache-filter"/></svg></button></section>
      <section><i class="grip-h"></i><button class="more" aria-label="选择"><svg><use href="#pointer"/></svg></button></section>
      <section><i class="grip-h"></i><button class="more" aria-label="草图"><svg><use href="#sketch"/></svg></button></section>
      <section><i class="grip-h"></i><button class="more" aria-label="凸台"><svg><use href="#pad"/></svg></button><button class="more" aria-label="凹槽"><svg><use href="#pocket"/></svg></button><button aria-label="旋转体"><svg><use href="#shaft"/></svg></button><button aria-label="旋转槽"><svg><use href="#groove"/></svg></button><button aria-label="孔"><svg><use href="#hole"/></svg></button><button aria-label="肋"><svg><use href="#rib"/></svg></button><button aria-label="开槽"><svg><use href="#slot"/></svg></button><button class="more" aria-label="加强肋"><svg><use href="#stiffener"/></svg></button><button class="tall" aria-label="多截面实体"><svg><use href="#multi"/></svg></button><button class="tall" aria-label="移除多截面"><svg><use href="#multi-cut"/></svg></button></section>
      <section class="s-thick"><i class="grip-h"></i><button class="more" aria-label="厚曲面"><svg><use href="#thick"/></svg></button></section>
      <section class="s-surface"><i class="grip-h"></i><button aria-label="约束对话框"><svg><use href="#grayed"/></svg></button><button aria-label="约束"><svg><use href="#constraint"/></svg></button></section>
    </div>
    <div class="dock-col second">
      <section class="s-blocks"><i class="grip-h"></i><button aria-label="拾取"><svg><use href="#block-pick"/></svg></button><button aria-label="更新"><svg><use href="#block-bolt"/></svg></button><button aria-label="检查"><svg><use href="#block-lens"/></svg></button></section>
      <section class="s-reference"><i class="grip-h"></i><button aria-label="点"><svg><use href="#point"/></svg></button><button aria-label="直线"><svg><use href="#line"/></svg></button><button aria-label="平面"><svg><use href="#plane-small"/></svg></button></section>
      <section class="s-notes"><i class="grip-h"></i><button class="more" aria-label="文本"><svg><use href="#text-note"/></svg></button><button class="more" aria-label="标志注释"><svg><use href="#flag-note"/></svg></button><button aria-label="基准"><svg><use href="#datum"/></svg></button></section>
      <section class="s-transform"><i class="grip-h"></i><button class="more" aria-label="平移"><svg><use href="#translate"/></svg></button></section>
      <section class="s-mirror"><i class="grip-h wide"></i><button aria-label="镜像"><svg><use href="#mirror"/></svg></button><button class="more" aria-label="阵列"><svg><use href="#pattern"/></svg></button></section>
      <section class="s-mirror"><i class="grip-h wide"></i></section>
    </div>
  </aside>

  <form class="dialog">
    <header><h2>定义分割</h2><button type="button" aria-label="帮助">?</button><button type="button" aria-label="关闭"><svg viewBox="0 0 16 16"><path d="M1 1 15 15M15 1 1 15"/></svg></button></header>
    <div class="dialog-body">
      <svg class="planet" viewBox="0 0 76 60"><defs><radialGradient id="glow"><stop offset="0" stop-color="#f8b048"/><stop offset=".5" stop-color="#fbd080" stop-opacity=".8"/><stop offset="1" stop-color="#fde6bf" stop-opacity="0"/></radialGradient><linearGradient id="globe" x1=".5" x2=".2" y2="1"><stop offset="0" stop-color="#b8dcec"/><stop offset=".5" stop-color="#4a7a9a"/><stop offset="1" stop-color="#1c2024"/></linearGradient></defs><circle cx="38" cy="38" r="34" fill="url(#glow)"/><path d="M0 34Q36 26 62 60H0Z" fill="url(#globe)"/></svg>
      <div class="field"><label for="split-el">分割元素：</label><input id="split-el" type="text" value="对称.1"></div>
      <div class="actions"><button type="button" class="default"><i class="led green"></i>确定</button><button type="button"><i class="led red"></i>取消</button></div>
    </div>
  </form>

  <div class="palette">
    <header><h2>修饰特征</h2><button aria-label="关闭">x</button></header>
    <div class="strip">
      <i class="grip-v"></i>
      <button class="more" aria-label="倒圆角"><svg><use href="#fillet"/></svg></button><button aria-label="倒角"><svg><use href="#chamfer"/></svg></button><button class="more" aria-label="拔模"><svg><use href="#draft"/></svg></button><button aria-label="盒体"><svg><use href="#shell"/></svg></button><button aria-label="厚度"><svg><use href="#thickness"/></svg></button><button aria-label="螺纹"><svg><use href="#thread"/></svg></button><button class="more" aria-label="移除面"><svg><use href="#remove-face"/></svg></button>
    </div>
  </div>

  <div class="ghost"></div>
  <div class="strip flyout">
    <i class="grip-v"></i>
    <button aria-label="分割"><svg><use href="#split"/></svg></button><button aria-label="厚曲面"><svg><use href="#thick"/></svg></button><button aria-label="封闭曲面"><svg><use href="#close-surface"/></svg></button><button aria-label="缝合曲面"><svg><use href="#sew"/></svg></button>
  </div>
  <div class="tooltip" role="tooltip">分割</div>
  <div class="marker"></div>
  <svg class="pointer-arrow" viewBox="0 0 490 375"><path d="M0 0 20 4 17 8 491 374 489 376 11 14 9 17Z"/></svg>
</main>
</body>
</html>
```
FILE: styles.css
```css
:root {
  --chrome: #cfcfe6;
  --ui: "Noto Sans", "Noto Sans CJK SC", sans-serif;
  --bar: linear-gradient(#fff 0, #fafafd 4px, #cfcfe6 14px, #cfcfe6 calc(100% - 14px), #9c9cb4 100%);
}
* { box-sizing: border-box; }
body {
  margin: 0;
  height: 100vh;
  display: grid;
  grid-template-rows: 29px 28px 56px 1fr;
  overflow: hidden;
  background: var(--chrome);
  font: 18px/24px var(--ui);
  color: #000;
}
h1, h2, p, ul { margin: 0; padding: 0; font-weight: 400; }
button { border: 0; padding: 0; background: none; font: inherit; color: inherit; }
.defs { position: absolute; width: 0; height: 0; }
.glyph-text { font: 12px "Liberation Sans", sans-serif; }

.titlebar { display: flex; align-items: flex-start; background: #f3f3f3; color: #8b8b8b; padding-left: 3px; }
.titlebar h1 { font-size: 17px; margin-left: 8px; }
.titlebar-icon { width: 22px; height: 20px; margin-top: 2px; }
.window-controls { margin-left: auto; display: flex; }
.window-controls button { width: 70px; height: 22px; }
.window-controls svg, .dialog header svg { width: 16px; height: 16px; fill: none; stroke: #8b8b8b; }

.menubar { display: flex; padding-left: 1px; }
.menubar-icon { width: 29px; height: 26px; margin: 2px 2px 0 0; }
.menubar > button { padding: 0 10px; margin-right: 1px; }
.menubar > .active { background: #fde3bb; }
.menubar > .latin { font-size: 19px; padding-right: 13px; }
.doc-controls { margin-left: auto; display: flex; gap: 2px; }
.doc-controls button { width: 27px; height: 27px; margin-top: 1px; background: #e3e3e3; border-radius: 2px; }
.doc-controls svg { width: 14px; height: 14px; fill: none; stroke: #9aa8b6; }

.toolbar { display: flex; align-items: flex-start; padding: 6px 0 0 9px; background: var(--bar); border-bottom: 1px solid #55555c; }
.grip-v { flex: none; width: 4px; height: 25px; background: linear-gradient(90deg, #fff 2px, #a4a4ac 2px); }
.combos { display: flex; gap: 4px; margin: 5px 0 0 14px; }
.combo { position: relative; width: 102px; height: 38px; }
.combo.narrow { width: 66px; }
.combo select { appearance: none; width: 100%; height: 100%; border: 2px solid #94949c; border-right-color: #c4c4cc; border-bottom-color: #c4c4cc; border-radius: 2px; background: #fff; padding: 0 32px 4px 3px; font: inherit; color: #000; }
.combo.narrow select { padding-right: 28px; padding-left: 5px; }
.combo.disabled select { color: #9a9a9a; border-color: #d4d4dc; background: linear-gradient(90deg, #efefef 38px, #fff 38px); opacity: 1; }
.combo svg { position: absolute; right: 6px; top: 17px; width: 14px; height: 8px; fill: none; stroke: #555; pointer-events: none; }
.combo.disabled svg { stroke: #bbb; }
.swatch { position: absolute; left: 9px; top: 6px; width: 55px; height: 27px; background: #0080ff; border: 2px solid; border-color: #888 #fff #fff #888; pointer-events: none; }
.group { display: flex; gap: 8px; margin: 7px 16px 0 6px; }
.group.spaced { margin-left: 15px; }
.toolbar button { width: 34px; height: 36px; }
.toolbar .group svg { width: 34px; height: 34px; }
.toolbar .large, .toolbar .group .large svg { width: 38px; height: 38px; }

.workspace { position: relative; display: flex; min-height: 0; overflow: hidden; }
.viewport {
  position: relative;
  flex: 1;
  min-width: 0;
  border-left: 3px solid #8c8c8c;
  border-top: 2px solid #808084;
  background: linear-gradient(#333366 0, #3c3c6c 30%, #484877 68%, #70709a 83%, #a4a4bb 100%);
  background: linear-gradient(#333366 0, #3c3c6c 30%, #474776 68%, #6c6c92 82%, #a2a2ba 100%);
}
.scene { position: absolute; inset: 0; width: 100%; height: 100%; }
.edge { fill: none; stroke: #000; stroke-width: 3; stroke-linejoin: round; }
.edge.top { fill: #b9b9e1; }
.edge.thin { stroke-width: 2; }
.wire { fill: none; stroke: #fff; stroke-width: 1; shape-rendering: crispEdges; }
.wire.dotted { stroke-dasharray: 4 3; }
.wire.dashed { stroke-dasharray: 16 8; }
.axis { fill: none; stroke: #d8d800; }
.axis text { font: 17px "Liberation Sans", sans-serif; fill: none; }
.selected { fill: none; stroke: #ff8000; stroke-width: 3; stroke-linejoin: round; }
.selected.bold { stroke-width: 4; }
.compass { fill: none; stroke: #d9c8ff; stroke-width: 3; }
.compass .pane { fill: #1f4560; }
.compass text { font: 22px "Noto Sans", sans-serif; fill: #f0e400; stroke: none; }
.triad { fill: none; stroke: #fff; }
.triad text { font: 22px "Noto Sans", sans-serif; fill: #fff; stroke: none; }

.tree { position: absolute; left: 1px; top: 115px; height: 770px; font: 300 26px/36px Roboto, "Noto Sans CJK SC", sans-serif; color: #fff; }
.tree ul { position: relative; height: 100%; display: grid; grid-auto-rows: 1fr; list-style: none; }
.tree-lines { position: absolute; left: 0; top: 0; width: 120px; height: 770px; fill: none; stroke: #fff; stroke-width: 3; }
.tree li { display: grid; grid-template-columns: 24px 40px auto; column-gap: 8px; align-items: center; justify-content: start; }
.tree .icon { grid-column: 2; width: 40px; height: 40px; }
.tree li span { grid-column: 3; padding: 0 2px; margin-left: -2px; height: 36px; border-radius: 4px; background: #333366; white-space: nowrap; }
.tree li .current { background: #ff8000; text-decoration: underline; text-underline-offset: 2px; }
.tree .d0 { grid-template-columns: 0 42px auto; column-gap: 8px; margin-left: -8px; }
.tree .d0 .icon { width: 42px; height: 42px; margin-top: -6px; }
.tree .d1 { padding-left: 4px; }
.tree .d2 { padding-left: 40px; }
.tree .d3 { padding-left: 76px; }
.knob { grid-column: 1; grid-row: 1; width: 23px; height: 23px; border-radius: 50%; background: linear-gradient(#000, #000) center 9px / 16px 4px no-repeat, radial-gradient(circle at 35% 30%, #d8d8d8, #a0a0a0 50%, #666); }
.knob.plus { background: linear-gradient(#000, #000) center 9px / 16px 4px no-repeat, linear-gradient(#000, #000) 10px center / 4px 16px no-repeat, radial-gradient(circle at 35% 30%, #d8d8d8, #a0a0a0 50%, #666); }
.knob ~ .icon, .knob ~ span { grid-row: 1; }
.note { position: absolute; left: 698px; top: 94px; font: 36px/48px "Noto Sans CJK SC", sans-serif; color: #fd3838; white-space: nowrap; }

.dock { flex: none; width: 115px; padding-left: 7px; display: grid; grid-template-columns: 60px 48px; align-items: start; background: linear-gradient(90deg, #fff 0, #f6f6fb 5px, #cfcfe6 14px, #cfcfe6 104px, #a4a4ba 115px); }
.dock-col { display: flex; flex-direction: column; }
.dock section { display: flex; flex-direction: column; align-items: flex-start; margin-top: 12px; }
.dock .s-top { margin-top: 9px; }
.dock .s-cache { margin-top: 16px; }
.dock .s-thick { margin-top: 11px; }
.dock .s-surface { margin-top: 14px; }
.dock .s-blocks { margin-top: 70px; }
.dock .s-reference { margin-top: 184px; }
.dock .s-notes { margin-top: 30px; }
.dock .s-transform { margin-top: 48px; }
.dock .s-mirror { margin-top: 3px; }
.grip-h { width: 25px; height: 4px; margin-bottom: 9px; background: linear-gradient(#fff 2px, #a4a4ac 2px); }
.grip-h.wide { width: 48px; }
.dock button { position: relative; width: 46px; height: 42px; padding: 5px 0 0 7px; text-align: left; display: flex; }
.dock button svg { width: 32px; height: 32px; flex: none; }
.dock .more { height: 45px; }
.dock .tall { height: 44px; padding-top: 8px; }
.dock .second button { padding-left: 6px; }
.more::after { content: ""; position: absolute; right: 0; bottom: 1px; border: 5px solid transparent; border-top: 6px solid #000; border-bottom: 0; }

.dialog { position: absolute; left: 1598px; top: 423px; width: 329px; border-radius: 8px; overflow: hidden; background: #fde6bf; box-shadow: 0 0 0 1px #5a5a70, 0 16px 36px rgba(20, 20, 40, .45); }
.dialog header { display: flex; height: 37px; padding-left: 5px; background: #f3f3f3; color: #8b8b8b; }
.dialog h2, .palette h2 { font-size: 18px; line-height: 35px; flex: 1; }
.dialog header button { width: 70px; display: grid; place-items: center; }
.dialog-body { position: relative; padding: 18px 11px 11px 17px; }
.planet { position: absolute; left: 0; bottom: 0; width: 76px; height: 60px; }
.field, .actions { position: relative; display: flex; align-items: center; }
.field label { width: 97px; white-space: nowrap; }
.field input { width: 168px; height: 32px; border: 2px solid #a0a4aa; padding: 0 4px; font: inherit; background: #fff; }
.actions { justify-content: flex-end; gap: 10px; margin-top: 16px; }
.actions button { width: 82px; height: 35px; display: flex; align-items: center; gap: 7px; padding-left: 8px; background: #d0d0e8; border: 3px solid; border-color: #fff #8a8aa0 #8a8aa0 #fff; }
.actions .default { border-color: #777 #666 #666 #777; border-width: 2px 3px 3px 2px; box-shadow: inset 2px 2px #fff, inset -2px -2px #a0a0b8; }
.led { width: 17px; height: 17px; border-radius: 50%; }
.led.green { background: radial-gradient(circle at 40% 30%, #a0ff90, #10a818 45%, #065008); }
.led.red { background: radial-gradient(circle at 40% 30%, #ffc0b0, #e82020 45%, #700808); }

.palette { position: absolute; left: 1895px; top: 689px; width: 326px; border-radius: 4px; overflow: hidden; box-shadow: 0 0 0 1px #60607a, 0 10px 24px rgba(20, 20, 40, .4); }
.palette header { display: flex; height: 45px; align-items: center; padding: 0 1px 0 13px; background: #f3f3f3; color: #8b8b8b; }
.palette header button { width: 30px; height: 30px; margin-top: 8px; line-height: 26px; background: #dadada; color: #fff; }
.strip { display: flex; align-items: flex-start; height: 53px; padding: 4px 2px 0 7px; background: var(--bar); }
.palette .strip .grip-v { margin-right: 15px; }
.strip button { position: relative; width: 43px; height: 48px; padding-top: 8px; display: flex; }
.strip button svg { width: 31px; height: 32px; }
.strip .more::after { right: 4px; bottom: 1px; }

.ghost { position: absolute; right: -10px; top: 850px; width: 274px; height: 182px; border-radius: 4px; box-shadow: 0 1px 7px 2px rgba(20, 20, 50, .6); }
.flyout { position: absolute; right: 0; top: 924px; width: 196px; height: 57px; border-bottom: 1px solid #666; }
.flyout .grip-v { margin-right: 16px; }
.flyout button { width: 42px; }
.tooltip { position: absolute; right: 127px; top: 977px; width: 47px; height: 31px; border: 2px solid #6a6a6a; background: #ffffe1; line-height: 28px; text-align: center; }
.marker { position: absolute; right: 111px; top: 921px; width: 117px; height: 89px; border: 3px solid #fd3838; }
.pointer-arrow { position: absolute; left: 1826px; top: 597px; width: 490px; height: 375px; fill: #fd3838; pointer-events: none; overflow: visible; }
```
